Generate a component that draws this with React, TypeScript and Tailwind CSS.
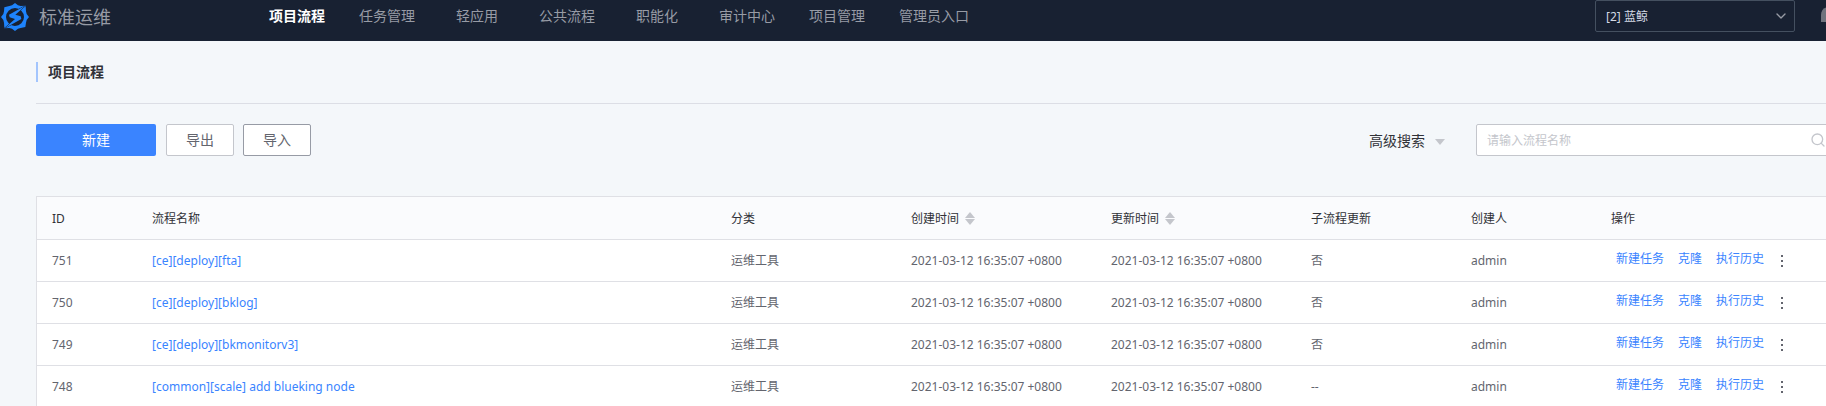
import React from "react";
import { ChevronDown, Search } from "lucide-react";

const navItems = ["项目流程", "任务管理", "轻应用", "公共流程", "职能化", "审计中心", "项目管理", "管理员入口"];

const flows = [
  { id: 751, name: "[ce][deploy][fta]", subflow: "否" },
  { id: 750, name: "[ce][deploy][bklog]", subflow: "否" },
  { id: 749, name: "[ce][deploy][bkmonitorv3]", subflow: "否" },
  { id: 748, name: "[common][scale] add blueking node", subflow: "--" },
];

const TIME = "2021-03-12 16:35:07 +0800";

function Logo() {
  return (
    <svg viewBox="0 0 84 84" className="size-7 shrink-0" aria-hidden="true">
      <path
        fill="#1e83fb"
        fillRule="evenodd"
        d="M42 0L51 7L59 9L74 8L75 25L77 33L84 42L77 51L75 59L73 72L59 75L51 77L42 84L33 77L25 75L10 76L9 59L7 51L0 42L7 33L9 25L10 13L25 9L33 7Z M42 15A27 27 0 1 0 42 69A27 27 0 1 0 42 15Z"
      />
      <path
        fill="#1e83fb"
        stroke="#182132"
        strokeWidth="3"
        paintOrder="stroke"
        d="M75 7L24 35L26 43L42 48L9 77L61 48L59 40L43 35Z"
      />
    </svg>
  );
}

function Bell() {
  return (
    <svg viewBox="0 0 16 18" className="h-[18px] w-4 shrink-0" fill="#6f737d" aria-hidden="true">
      <path d="M8 0C3 0 0 3 0 8V15H16V8C16 3 13 0 8 0Z" />
      <path d="M5 16H11V18H5Z" />
    </svg>
  );
}

function SortIcon() {
  return (
    <svg viewBox="0 0 10 14" className="h-3.5 w-2.5" fill="#c4c6cc" aria-hidden="true">
      <path d="M5 0L10 6H0Z" />
      <path d="M5 13L10 7H0Z" />
    </svg>
  );
}

function SortHeader({ label }: { label: string }) {
  return (
    <button type="button" className="flex items-center gap-1.5">
      {label}
      <SortIcon />
    </button>
  );
}

function Header() {
  return (
    <header className="flex h-[41px] items-start bg-[#182132]">
      <div className="flex h-[34px] w-[252px] shrink-0 items-center gap-2.5 pl-px text-lg text-[#979ba5]">
        <Logo />
        标准运维
      </div>
      <nav className="flex h-8 items-center text-sm">
        {navItems.map((item, i) => (
          <a
            key={item}
            href="#"
            className={
              i === 0
                ? "min-w-[90px] px-[17px] text-center font-bold text-white"
                : "min-w-[90px] px-[17px] text-center text-[#979ba5]"
            }
          >
            {item}
          </a>
        ))}
      </nav>
      <div className="-mr-[11px] ml-auto flex h-8 shrink-0 items-center gap-[26px]">
        <div className="relative">
          <select
            aria-label="项目"
            className="block h-8 w-[200px] appearance-none rounded-xs border border-[#445060] bg-transparent pt-0.5 pl-2.5 text-xs text-[#d3d9e4]"
          >
            <option>[2] 蓝鲸</option>
          </select>
          <ChevronDown className="pointer-events-none absolute top-2 right-1.5 size-4 text-[#979ba5]" />
        </div>
        <Bell />
      </div>
    </header>
  );
}

function Toolbar() {
  return (
    <div className="mt-5 flex items-center text-sm text-[#63656e]">
      <button type="button" className="h-8 w-[120px] rounded-xs bg-[#3a84ff] text-white">
        新建
      </button>
      <button type="button" className="ml-2.5 h-8 w-[68px] rounded-xs border border-[#c4c6cc] bg-white">
        导出
      </button>
      <button type="button" className="ml-[9px] h-8 w-[68px] rounded-xs border border-[#979ba5] bg-white">
        导入
      </button>
      <button type="button" className="mr-[31px] ml-auto flex items-center gap-2.5 pt-0.5 text-[#313238]">
        高级搜索
        <svg viewBox="0 0 10 6" className="mt-0.5 h-1.5 w-2.5" fill="#c4c6cc" aria-hidden="true">
          <path d="M0 0H10L5 6Z" />
        </svg>
      </button>
      <div className="relative">
        <input
          type="search"
          aria-label="请输入流程名称"
          placeholder="请输入流程名称"
          className="block h-8 w-[360px] rounded-xs border border-[#c4c6cc] bg-white pl-2.5 text-xs placeholder:text-[#c4c6cc]"
        />
        <Search className="pointer-events-none absolute top-2 right-2.5 size-4 text-[#c4c6cc]" strokeWidth={2} />
      </div>
    </div>
  );
}

function FlowTable() {
  return (
    <div className="mt-10 border-t border-l border-[#dfe0e5] bg-white">
      <table className="w-full table-fixed border-separate border-spacing-0 text-left text-xs text-[#63656e]">
        <colgroup>
          <col className="w-[100px]" />
          <col />
          <col className="w-[180px]" />
          <col className="w-[200px]" />
          <col className="w-[200px]" />
          <col className="w-[160px]" />
          <col className="w-[140px]" />
          <col className="w-[240px]" />
        </colgroup>
        <thead>
          <tr className="h-[43px] bg-[#fafbfd] text-[#313238] *:border-b *:border-[#dfe0e5] *:px-[15px] *:pt-0.5 *:font-normal">
            <th>ID</th>
            <th>流程名称</th>
            <th>分类</th>
            <th>
              <SortHeader label="创建时间" />
            </th>
            <th>
              <SortHeader label="更新时间" />
            </th>
            <th>子流程更新</th>
            <th>创建人</th>
            <th>操作</th>
          </tr>
        </thead>
        <tbody>
          {flows.map((flow) => (
            <tr key={flow.id} className="h-[42px] *:border-b *:border-[#dfe0e5] *:px-[15px]">
              <td>{flow.id}</td>
              <td>
                <a href="#" className="text-[#3a84ff]">
                  {flow.name}
                </a>
              </td>
              <td>运维工具</td>
              <td>{TIME}</td>
              <td>{TIME}</td>
              <td>{flow.subflow}</td>
              <td>admin</td>
              <td>
                <div className="flex items-center pl-[5px] text-[#3a84ff]">
                  <div className="flex gap-3.5 pb-1">
                    <a href="#">新建任务</a>
                    <a href="#">克隆</a>
                    <a href="#">执行历史</a>
                  </div>
                  <button type="button" aria-label="更多" className="ml-4">
                    <svg viewBox="0 0 4 14" className="h-3.5 w-1" fill="#63656e" aria-hidden="true">
                      <path d="M1 1H3V3H1ZM1 6H3V8H1ZM1 11H3V13H1Z" />
                    </svg>
                  </button>
                </div>
              </td>
            </tr>
          ))}
        </tbody>
      </table>
    </div>
  );
}

export default function App() {
  return (
    <div className="h-screen overflow-hidden bg-[#f4f7fa] font-['Noto_Sans','Noto_Sans_CJK_SC',sans-serif]">
      <Header />
      <main className="-mr-[10px] pl-9">
        <div className="flex h-[63px] items-center border-b border-[#dcdee5]">
          <h1 className="border-l-2 border-[#a3c5fd] pl-2.5 text-sm leading-5 font-bold text-[#313238]">项目流程</h1>
        </div>
        <Toolbar />
        <FlowTable />
      </main>
    </div>
  );
}
